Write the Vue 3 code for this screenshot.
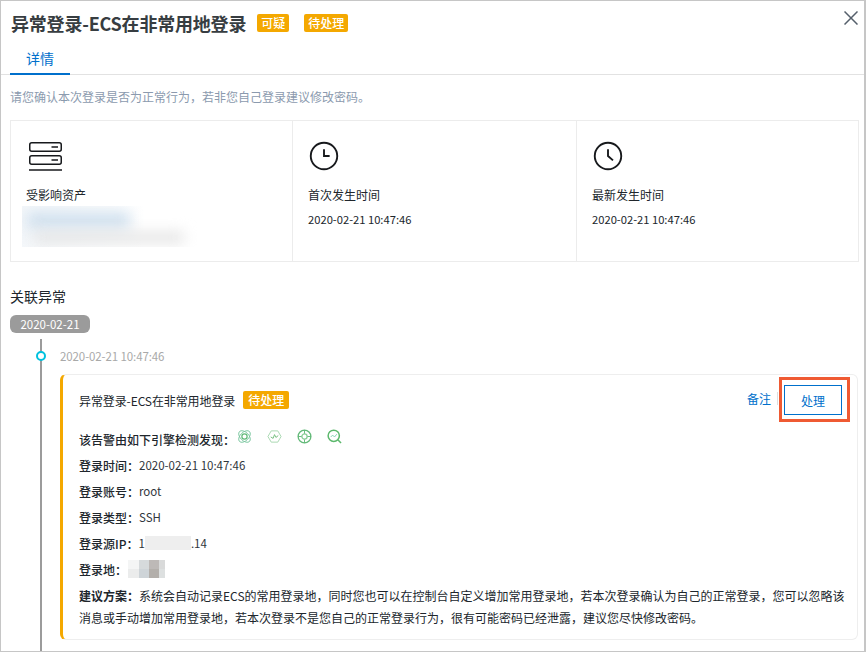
<script setup>
const stats = [
  { label: "首次发生时间", time: "2020-02-21 10:47:46", hand: "M12 6.5V12H16.5" },
  { label: "最新发生时间", time: "2020-02-21 10:47:46", hand: "M12 6.5V12L16 15.5" },
];

const rows = [
  { label: "登录时间：", value: "2020-02-21 10:47:46" },
  { label: "登录账号：", value: "root" },
  { label: "登录类型：", value: "SSH" },
];

const mosaic = ["#f4f5f5", "#d6dadc", "#bdb9b7", "#d9dada", "#ebecec", "#ced4d8", "#b3afab", "#dde0e0"];
</script>

<template>
  <div class="drawer">
    <header class="head">
      <h1>异常登录-ECS在非常用地登录</h1>
      <span class="tag first">可疑</span>
      <span class="tag">待处理</span>
      <svg class="close" viewBox="0 0 14 14" width="14" height="14">
        <path d="M0.5 0.5L13.5 13.5M13.5 0.5L0.5 13.5" stroke="#555f6b" stroke-width="1.5" fill="none" />
      </svg>
    </header>

    <nav class="tabs">
      <span class="tab">详情</span>
    </nav>

    <p class="hint">请您确认本次登录是否为正常行为，若非您自己登录建议修改密码。</p>

    <section class="stats">
      <div class="stat">
        <svg class="server-icon" viewBox="0 0 33 29" width="33" height="29">
          <rect x="0.75" y="0.75" width="31.5" height="8.5" rx="2" fill="none" stroke="#17191c" stroke-width="1.5" />
          <rect x="0.75" y="13.75" width="31.5" height="8.5" rx="2" fill="none" stroke="#17191c" stroke-width="1.5" />
          <path d="M22.5 5H29M22.5 18H29" stroke="#17191c" stroke-width="1.6" />
          <path d="M0 28H33" stroke="#17191c" stroke-width="1.6" />
        </svg>
        <div class="stat-label">受影响资产</div>
        <div class="blurred">
          <i class="blur-a"></i>
          <i class="blur-b"></i>
        </div>
      </div>
      <div v-for="item in stats" :key="item.label" class="stat">
        <svg class="clock-icon" viewBox="0 0 24 24" width="30" height="30">
          <circle cx="12" cy="12" r="10.6" fill="none" stroke="#17191c" stroke-width="1.5" />
          <path :d="item.hand" fill="none" stroke="#17191c" stroke-width="1.5" />
        </svg>
        <div class="stat-label">{{ item.label }}</div>
        <div class="stat-time">{{ item.time }}</div>
      </div>
    </section>

    <h2 class="section-title">关联异常</h2>
    <div class="date-pill">2020-02-21</div>

    <div class="timeline">
      <div class="entry-time">
        <span class="dot"></span>
        2020-02-21 10:47:46
      </div>
      <article class="card">
        <div class="card-head">
          <span class="card-title">异常登录-ECS在非常用地登录</span>
          <span class="tag small">待处理</span>
          <a class="note">备注</a>
          <span class="sep"></span>
          <button type="button" class="handle">处理</button>
          <span class="highlight"></span>
        </div>

        <div class="row engines">
          <b>该告警由如下引擎检测发现：</b>
          <svg viewBox="0 0 16 16" width="15" height="15" fill="none" stroke="#7cc7a0" stroke-width="1">
            <ellipse cx="8" cy="8" rx="7.5" ry="4.5" transform="rotate(45 8 8)" />
            <ellipse cx="8" cy="8" rx="7.5" ry="4.5" transform="rotate(-45 8 8)" />
            <circle cx="8" cy="8" r="2.8" stroke="#62b978" stroke-width="1.3" />
          </svg>
          <svg viewBox="0 0 16 16" width="15" height="15" fill="none" stroke="#a5d6ae" stroke-width="1">
            <path d="M4.5 2H11.5L15 8L11.5 14H4.5L1 8Z" />
            <path d="M4 8.5L6.5 10L8 6L9.5 9L12 7" stroke="#72bd7c" />
          </svg>
          <svg viewBox="0 0 16 16" width="15" height="15" fill="none" stroke="#62b978" stroke-width="1.4">
            <circle cx="8" cy="8" r="6.8" />
            <path d="M8 1V15M1 8H15" stroke-width="1" />
            <circle cx="8" cy="8" r="2.8" fill="#fff" stroke="#8ccf98" />
          </svg>
          <svg viewBox="0 0 16 16" width="15" height="15" fill="none" stroke="#5cb86c" stroke-width="1.6">
            <circle cx="7.2" cy="7.2" r="6" />
            <path d="M11.5 11.5L15 15" />
            <path d="M4 8.5L6 6.5L8 8.5L10.5 5.5" stroke="#7fcfb0" stroke-width="1" />
          </svg>
        </div>

        <div v-for="row in rows" :key="row.label" class="row">
          <b>{{ row.label }}</b><span class="value">{{ row.value }}</span>
        </div>
        <div class="row">
          <b>登录源IP：</b><span class="value">1</span><i class="ip-mask"></i><span class="value">.14</span>
        </div>
        <div class="row">
          <b>登录地：</b>
          <span class="mosaic">
            <i v-for="c in mosaic" :key="c" :style="{ background: c }"></i>
          </span>
        </div>
        <p class="advice">
          <b>建议方案：</b>系统会自动记录ECS的常用登录地，同时您也可以在控制台自定义增加常用登录地，若本次登录确认为自己的正常登录，您可以忽略该消息或手动增加常用登录地，若本次登录不是您自己的正常登录行为，很有可能密码已经泄露，建议您尽快修改密码。
        </p>
      </article>
    </div>
  </div>
</template>

<style>
html,
body {
  margin: 0;
  background: #fff;
}
</style>

<style scoped>
.drawer {
  box-sizing: border-box;
  width: 866px;
  height: 652px;
  overflow: hidden;
  border: 1px solid #c6c6c6;
  border-width: 1px 2px 1px 1px;
  background: #fff;
  color: #20262c;
  font-family: "Noto Sans CJK SC", sans-serif;
  font-size: 12px;
}

.head {
  display: flex;
  align-items: center;
  height: 44px;
  padding-left: 10px;
  position: relative;
}

.head h1 {
  margin: 0;
  font-size: 18px;
  font-weight: 700;
  color: #373d41;
  letter-spacing: -0.2px;
}

.tag {
  display: inline-block;
  height: 18px;
  line-height: 18px;
  padding: 0 4px;
  border-radius: 2px;
  background: #f4a800;
  color: #fff;
  font-size: 12px;
  font-weight: 500;
  margin-left: 15px;
}

.tag.first {
  margin-left: 11px;
}

.tag.small {
  margin-left: 8px;
  padding: 0 5px;
}

.close {
  position: absolute;
  right: 6px;
  top: 10px;
}

.tabs {
  height: 29px;
  border-bottom: 1px solid #e2e2e2;
  padding-left: 9px;
}

.tab {
  display: block;
  box-sizing: border-box;
  width: 60px;
  height: 30px;
  line-height: 26px;
  text-align: center;
  color: #0070cc;
  font-size: 14px;
  border-bottom: 2px solid #0070cc;
}

.hint {
  margin: 14px 0 0 9px;
  height: 16px;
  line-height: 16px;
  font-size: 12px;
  color: #8b9aae;
}

.stats {
  display: grid;
  grid-template-columns: 281px 284px 1fr;
  box-sizing: border-box;
  width: 849px;
  height: 142px;
  margin: 15px 0 0 9px;
  border: 1px solid #ececec;
}

.stat {
  padding: 21px 0 0 15px;
  border-left: 1px solid #ececec;
  min-width: 0;
}

.stat:first-child {
  border-left: 0;
}

.server-icon {
  display: block;
  margin-left: 3px;
}

.clock-icon {
  display: block;
  margin: -1px 0 0 1px;
}

.stat-label {
  margin-top: 16px;
  height: 16px;
  line-height: 16px;
  font-size: 12px;
}

.stat-time {
  margin-top: 8px;
  height: 16px;
  line-height: 16px;
  font-size: 11.2px;
}

.blurred {
  height: 41px;
  margin: 3px 0 0 -4px;
  width: 175px;
  position: relative;
  overflow: hidden;
  background: linear-gradient(to right, #f4f7fa, #ffffff 70%);
}

.blurred i {
  position: absolute;
  display: block;
  filter: blur(7px);
}

.blur-a {
  left: 5px;
  top: 6px;
  width: 103px;
  height: 17px;
  background: #d0e0ee;
}

.blur-b {
  left: 12px;
  top: 26px;
  width: 150px;
  height: 11px;
  background: #e3e3e3;
}

.section-title {
  margin: 25px 0 0 9px;
  height: 18px;
  line-height: 18px;
  font-size: 14px;
  font-weight: 400;
}

.date-pill {
  width: 80px;
  height: 18px;
  line-height: 18px;
  margin: 10px 0 0 9px;
  border-radius: 6px;
  background: #9b9b9b;
  color: #fff;
  text-align: center;
  font-size: 11.5px;
}

.timeline {
  margin: 6px 0 0 39px;
  padding-left: 18px;
  border-left: 2px solid #9b9b9b;
  height: 320px;
}

.entry-time {
  position: relative;
  padding-top: 9px;
  height: 27px;
  line-height: 16px;
  box-sizing: border-box;
  color: #a9a9a9;
  font-size: 11.5px;
  letter-spacing: -0.1px;
}

.dot {
  position: absolute;
  left: -24px;
  top: 12px;
  box-sizing: border-box;
  width: 10px;
  height: 10px;
  border: 2px solid #00c1de;
  border-radius: 50%;
  background: #fff;
}

.card {
  box-sizing: border-box;
  width: 798px;
  height: 266px;
  margin-top: 8px;
  padding: 0 12px 0 16px;
  border: 1px solid #eeeeee;
  border-left: 3px solid #f4a800;
  border-radius: 6px;
}

.card-head {
  position: relative;
  display: flex;
  align-items: center;
  height: 50px;
}

.card-title {
  font-size: 12px;
  letter-spacing: -0.1px;
}

.note {
  margin-left: auto;
  color: #0070cc;
  font-size: 12px;
  margin-top: -4px;
}

.sep {
  width: 1px;
  height: 13px;
  margin: -4px 6px 0 6px;
  background: #dedede;
}

.handle {
  width: 58px;
  height: 30px;
  margin: 0 3px 0 0;
  padding: 0;
  border: 1px solid #0070cc;
  background: #fff;
  color: #0070cc;
  font-family: inherit;
  font-size: 12px;
}

.highlight {
  position: absolute;
  right: -5px;
  top: 2px;
  box-sizing: border-box;
  width: 71px;
  height: 45px;
  border: 3px solid #ef5a33;
}

.row {
  display: flex;
  align-items: center;
  height: 26px;
}

.row b {
  font-weight: 500;
}

.value {
  color: #30363c;
  font-size: 11.5px;
}

.engines {
  margin-top: 1px;
  gap: 15px;
}

.engines b {
  margin-right: -13px;
}

.engines svg {
  margin-top: -5px;
}

.ip-mask {
  display: block;
  width: 46px;
  height: 14px;
  background: #eeeeee;
}

.mosaic {
  display: grid;
  grid-template-columns: 11px 10px 10px 6px;
  grid-auto-rows: 9px;
  margin-left: 1px;
}

.mosaic i {
  display: block;
}

.advice {
  margin: 3px 0 0;
  line-height: 22px;
  font-size: 12px;
}

.advice b {
  font-weight: 700;
}
</style>
